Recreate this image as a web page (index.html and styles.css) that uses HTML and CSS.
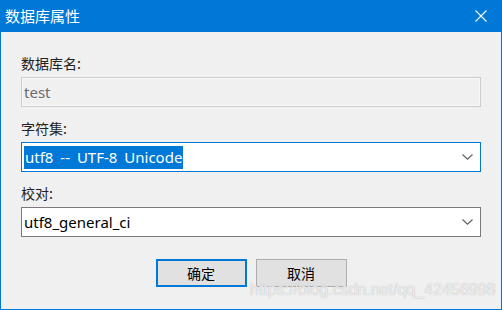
FILE: index.html
```html
<!DOCTYPE html>
<html lang="zh-CN">
<head>
  <meta charset="UTF-8">
  <title>数据库属性</title>
  <link rel="stylesheet" href="styles.css">
</head>
<body>
  <div class="window">
    <div class="titlebar">
      <span class="title">数据库属性</span>
      <svg class="close" width="12" height="12" viewBox="0 0 12 12">
        <path d="M0.5 0.5 L11.5 11.5 M11.5 0.5 L0.5 11.5" stroke="#fff" stroke-width="1.1" fill="none"/>
      </svg>
    </div>

    <div class="content">
      <div class="label">数据库名:</div>
      <div class="field disabled">test</div>

      <div class="label">字符集:</div>
      <div class="field combo focused">
        <span class="selected">utf8 -- UTF-8 Unicode</span>
        <svg class="chevron" width="11" height="6" viewBox="0 0 11 6">
          <path d="M0.5 0.5 L5.5 5.2 L10.5 0.5" stroke="#606060" stroke-width="1.2" fill="none"/>
        </svg>
      </div>

      <div class="label">校对:</div>
      <div class="field combo">
        <span class="value">utf8_general_ci</span>
        <svg class="chevron" width="11" height="6" viewBox="0 0 11 6">
          <path d="M0.5 0.5 L5.5 5.2 L10.5 0.5" stroke="#606060" stroke-width="1.2" fill="none"/>
        </svg>
      </div>

      <div class="buttons">
        <button class="btn default">确定</button>
        <button class="btn">取消</button>
      </div>
    </div>

    <div class="watermark">https://blog.csdn.net/qq_42456998</div>
  </div>
</body>
</html>
```

FILE: styles.css
```css
body {
  margin: 0;
  padding: 0;
  font-family: "Noto Sans", "Noto Sans CJK SC", sans-serif;
  background-color: #f0f0f0;
}

.window {
  position: relative;
  width: 502px;
  height: 310px;
  box-sizing: border-box;
  border: 1px solid #0078d7;
  border-top: none;
  background-color: #f0f0f0;
  overflow: hidden;
}

.titlebar {
  height: 32px;
  margin: 0 -1px;
  padding: 0 15px 0 5px;
  background-color: #0078d7;
  color: #fff;
  display: flex;
  align-items: center;
  justify-content: space-between;
}

.title {
  font-family: "Noto Sans CJK SC", sans-serif;
  font-size: 15px;
  line-height: 20px;
}

.close {
  display: block;
}

.content {
  padding: 21px 20px 0 20px;
}

.label {
  font-family: "Noto Sans CJK SC", sans-serif;
  font-size: 14px;
  line-height: 20px;
  color: #222;
  margin-bottom: 4px;
}

.field {
  height: 30px;
  box-sizing: border-box;
  margin-bottom: 11px;
  border: 1px solid #7a7a7a;
  background-color: #fff;
  font-size: 15px;
  color: #000;
  display: flex;
  align-items: center;
  padding-left: 2px;
}

.field.disabled {
  border-color: #cccccc;
  background-color: #f0f0f0;
  box-shadow: inset 0 0 0 1px #f8f8f8;
  color: #6d6d6d;
}

.field.focused {
  border-color: #0078d7;
}

.combo {
  justify-content: space-between;
  padding-right: 7px;
}

.selected {
  background-color: #0078d7;
  color: #fff;
  line-height: 23px;
  padding: 0 1px;
  word-spacing: 3px;
}

.value {
  line-height: 23px;
}

.chevron {
  display: block;
}

.buttons {
  display: flex;
  justify-content: center;
  gap: 9px;
  margin-top: 22px;
}

.btn {
  width: 91px;
  height: 28px;
  box-sizing: border-box;
  border: 1px solid #adadad;
  background-color: #e1e1e1;
  font-family: "Noto Sans CJK SC", sans-serif;
  font-size: 14px;
  color: #000;
  padding: 0;
}

.btn.default {
  border: 2px solid #0078d7;
}

.watermark {
  position: absolute;
  left: 249px;
  top: 281px;
  font-family: "Liberation Sans", Arial, sans-serif;
  font-size: 16px;
  color: rgba(255, 255, 255, 0.75);
  text-shadow: 0 0 1px rgba(120, 120, 120, 0.6);
}
```
